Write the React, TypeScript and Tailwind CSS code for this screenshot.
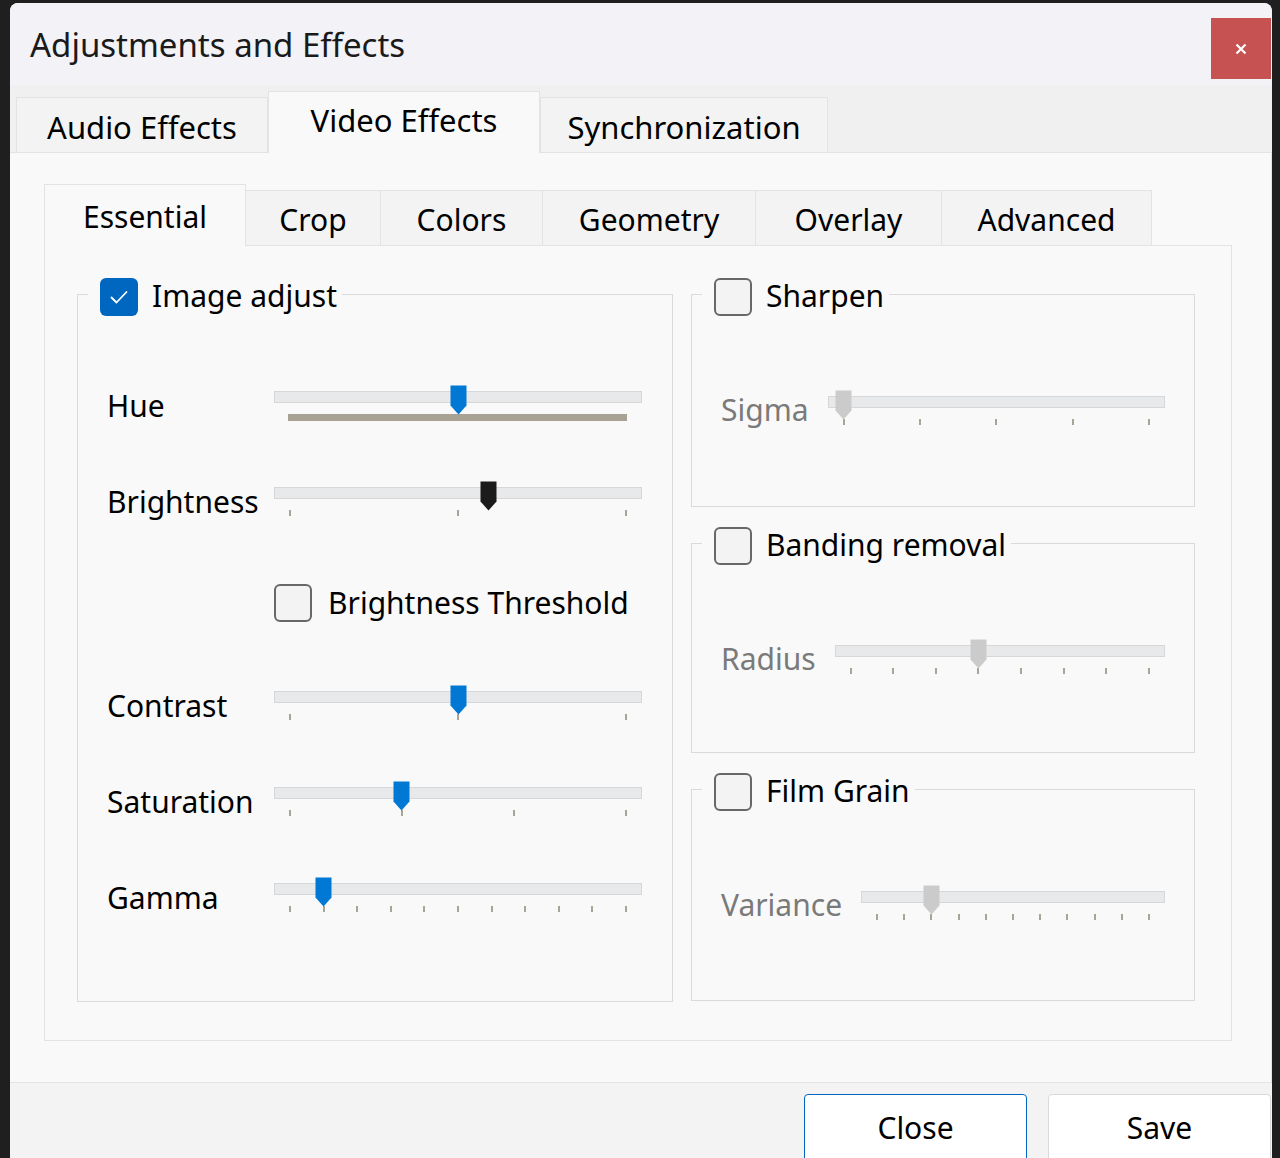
import React from "react";

type Tone = "blue" | "black" | "gray";

const HANDLE: Record<Tone, string> = { blue: "#0078d4", black: "#1b1b1b", gray: "#cbcbcb" };

function Handle({ tone }: { tone: Tone }) {
  return (
    <svg width="17" height="30" viewBox="0 0 17 30">
      <path d="M0.5 0.5H16.5V20.5L8.5 29.5L0.5 20.5Z" fill={HANDLE[tone]} />
    </svg>
  );
}

// ticks: number of tick marks, or "bar" when they are so dense they merge into a strip
function Slider({ value, ticks, tone, width }: { value: number; ticks: number | "bar"; tone: Tone; width?: number }) {
  const pos = (f: number) => `calc(15px + (100% - 32px) * ${f})`;
  return (
    <div className="relative h-[32px]" style={width ? { width } : undefined}>
      <div className="h-[12px] border border-[#d5d7d8] bg-[#e7e9ea]" />
      {ticks === "bar" ? (
        <div className="absolute top-[23px] left-[14px] right-[15px] h-[7px] bg-[#a8a294]" />
      ) : (
        Array.from({ length: ticks }).map((_, i) => (
          <div key={i} className="absolute top-[23px] w-[2px] h-[6px] bg-[#a8a498]" style={{ left: pos(i / (ticks - 1)) }} />
        ))
      )}
      <div className="absolute top-[-6px]" style={{ left: `calc(15px + (100% - 32px) * ${value} - 7.5px)` }}>
        <Handle tone={tone} />
      </div>
    </div>
  );
}

function Checkbox({ checked }: { checked?: boolean }) {
  if (checked)
    return (
      <div className="w-[38px] h-[38px] shrink-0 rounded-[6px] bg-[#0067c0] flex items-center justify-center">
        <svg width="38" height="38" viewBox="0 0 38 38" fill="none">
          <path d="M11.5 19.5L16.5 24.5L26.5 14" stroke="white" strokeWidth="1.8" strokeLinecap="round" strokeLinejoin="round" />
        </svg>
      </div>
    );
  return <div className="w-[38px] h-[38px] shrink-0 rounded-[6px] border-2 border-[#686868] bg-[#f3f3f3]" />;
}

// the group line runs a little above the middle of the checkbox, so the legend box is shorter than its content
function Legend({ label, checked }: { label: string; checked?: boolean }) {
  return (
    <legend className="ml-[10px] pl-[12px] pr-[5px] h-[32px]">
      <div className="flex items-center gap-[14px] h-[38px]">
        <Checkbox checked={checked} />
        <span className="text-[30px] leading-[30px] mt-[-2px]">{label}</span>
      </div>
    </legend>
  );
}

function Row({ label, children }: { label: string; children: React.ReactNode }) {
  return (
    <div className="flex items-start h-[96px]">
      <div className="w-[167px] pt-[2px] text-[30px] leading-[30px]">{label}</div>
      <div className="mt-[2px]">{children}</div>
    </div>
  );
}

function EffectBox({ title, label, h, value, ticks }: { title: string; label: string; h: string; value: number; ticks: number }) {
  return (
    <fieldset className={`w-[504px] ${h} border border-[#dadada]`}>
      <Legend label={title} />
      <div className="mt-[84px] px-[29px] flex items-start gap-[19px]">
        <div className="pt-[1px] text-[30px] leading-[30px] text-[#7a7a7a]">{label}</div>
        <div className="flex-1 mt-[2px]">
          <Slider value={value} ticks={ticks} tone="gray" />
        </div>
      </div>
    </fieldset>
  );
}

const TOP_TABS = [
  { label: "Audio Effects", w: "w-[252px]" },
  { label: "Video Effects", w: "w-[272px]", active: true },
  { label: "Synchronization", w: "w-[288px]" },
];

const SUB_TABS = [
  { label: "Essential", w: "w-[202px]", active: true },
  { label: "Crop", w: "w-[135px]" },
  { label: "Colors", w: "w-[162px]" },
  { label: "Geometry", w: "w-[213px]" },
  { label: "Overlay", w: "w-[186px]" },
  { label: "Advanced", w: "w-[210px]" },
];

export default function App() {
  return (
    <div className="w-[1280px] h-[1158px] overflow-hidden bg-[#1f1f1f] pt-[3px] pl-[10px] pr-[8px] font-['Noto_Sans',sans-serif] text-black">
      <div className="h-full rounded-t-[8px] overflow-hidden flex flex-col bg-[#f9f9f9]">
        {/* Title bar */}
        <div className="h-[82px] shrink-0 bg-[#f2f2f7] flex items-start justify-between">
          <div className="h-full flex items-center pl-[20px] text-[33px] leading-none text-[#1a1a1a]">Adjustments and Effects</div>
          <button className="mt-[15px] mr-[1px] w-[60px] h-[61px] bg-[#c75252] flex items-center justify-center">
            <svg width="12" height="12" viewBox="0 0 12 12">
              <path d="M1.5 1.5L10.5 10.5M10.5 1.5L1.5 10.5" stroke="white" strokeWidth="2.2" />
            </svg>
          </button>
        </div>

        {/* Top tabs */}
        <div className="h-[68px] shrink-0 bg-[#f0f0f0] border-b border-[#e3e3e3] flex items-end pl-[6px]">
          {TOP_TABS.map((t) =>
            t.active ? (
              <div key={t.label} className={`${t.w} h-[62px] mb-[-1px] relative bg-[#f9f9f9] border-x border-t border-[#e3e3e3] flex items-center justify-center text-[31px] leading-[31px] pb-[4px]`}>
                {t.label}
              </div>
            ) : (
              <div key={t.label} className={`${t.w} h-[55px] bg-[#f3f3f3] border-t border-x border-[#e3e3e3] flex items-center justify-center text-[31px] leading-[31px] pt-[4px]`}>
                {t.label}
              </div>
            )
          )}
        </div>

        {/* Content */}
        <div className="flex-1 bg-[#f9f9f9] border-r border-[#e3e3e3] pt-[31px] pl-[34px]">
          <div className="flex items-end h-[61px]">
            {SUB_TABS.map((t) =>
              t.active ? (
                <div key={t.label} className={`${t.w} h-[62px] mb-[-1px] relative z-10 bg-[#f9f9f9] border-x border-t border-[#e3e3e3] flex items-center justify-center text-[30px] leading-[30px] pt-[2px]`}>
                  {t.label}
                </div>
              ) : (
                <div key={t.label} className={`${t.w} h-[55px] bg-[#f3f3f3] border-t border-r border-[#e3e3e3] flex items-center justify-center text-[30px] leading-[30px] pt-[4px]`}>
                  {t.label}
                </div>
              )
            )}
          </div>

          <div className="w-[1188px] h-[796px] border border-[#e3e3e3] pt-[32px] pl-[32px] flex items-start gap-[18px]">
            {/* Image adjust */}
            <fieldset className="w-[596px] h-[724px] border border-[#dadada]">
              <Legend label="Image adjust" checked />
              <div className="mt-[79px] pl-[29px]">
                <Row label="Hue">
                  <Slider width={368} value={0.5} ticks="bar" tone="blue" />
                </Row>
                <Row label="Brightness">
                  <Slider width={368} value={0.59} ticks={3} tone="black" />
                </Row>
                <div className="h-[108px] pl-[167px] pt-[3px]">
                  <div className="flex items-center gap-[16px]">
                    <Checkbox />
                    <span className="text-[30px] leading-[30px]">Brightness Threshold</span>
                  </div>
                </div>
                <Row label="Contrast">
                  <Slider width={368} value={0.5} ticks={3} tone="blue" />
                </Row>
                <Row label="Saturation">
                  <Slider width={368} value={0.333} ticks={4} tone="blue" />
                </Row>
                <Row label="Gamma">
                  <Slider width={368} value={0.1} ticks={11} tone="blue" />
                </Row>
              </div>
            </fieldset>

            {/* Right column */}
            <div className="flex flex-col gap-[20px]">
              <EffectBox title="Sharpen" label="Sigma" h="h-[229px]" value={0} ticks={5} />
              <EffectBox title="Banding removal" label="Radius" h="h-[226px]" value={3 / 7} ticks={8} />
              <EffectBox title="Film Grain" label="Variance" h="h-[228px]" value={0.2} ticks={11} />
            </div>
          </div>
        </div>

        {/* Buttons */}
        <div className="h-[76px] shrink-0 overflow-hidden bg-[#f3f3f3] border-t border-[#e3e3e3] flex justify-end items-start gap-[21px] pt-[11px] pr-[1px]">
          <button className="w-[223px] h-[80px] rounded-t-[4px] bg-white border border-[#0067c0] flex justify-center items-start pt-[18px] text-[30px] leading-[30px]">
            Close
          </button>
          <button className="w-[223px] h-[80px] rounded-t-[4px] bg-white border border-[#d9d9d9] flex justify-center items-start pt-[18px] text-[30px] leading-[30px]">
            Save
          </button>
        </div>
      </div>
    </div>
  );
}
